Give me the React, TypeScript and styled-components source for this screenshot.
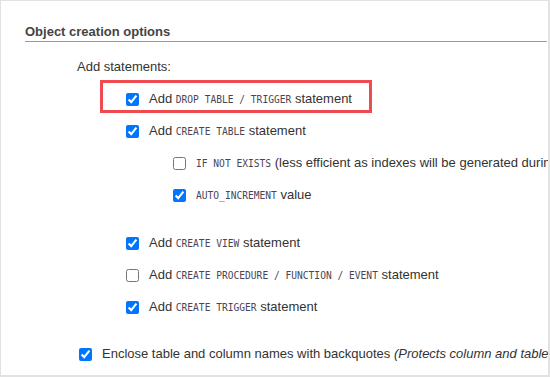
import React from 'react';
import styled, { createGlobalStyle } from 'styled-components';

const GlobalStyle = createGlobalStyle`
    body {
        margin: 0;
        background: #fff;
        font-family: "Liberation Sans", Arial, sans-serif;
    }
`;

interface Option {
    checked: boolean;
    parts: (string | { code: string })[];
    note?: string;
}

const tableOptions: Option[] = [
    { checked: true, parts: ['Add ', { code: 'CREATE TABLE' }, ' statement'] },
];

const tableSubOptions: Option[] = [
    { checked: false, parts: [{ code: 'IF NOT EXISTS' }, ' (less efficient as indexes will be generated during table creation)'] },
    { checked: true, parts: [{ code: 'AUTO_INCREMENT' }, ' value'] },
];

const otherOptions: Option[] = [
    { checked: true, parts: ['Add ', { code: 'CREATE VIEW' }, ' statement'] },
    { checked: false, parts: ['Add ', { code: 'CREATE PROCEDURE / FUNCTION / EVENT' }, ' statement'] },
    { checked: true, parts: ['Add ', { code: 'CREATE TRIGGER' }, ' statement'] },
];

const OptionRow = ({ option, indent }: { option: Option; indent: number }) => (
    <Row indent={indent}>
        <Check type="checkbox" defaultChecked={option.checked} />
        <Label>
            {option.parts.map((p, i) =>
                typeof p === 'string' ? <span key={i}>{p}</span> : <Code key={i}>{p.code}</Code>
            )}
            {option.note && <Note> {option.note}</Note>}
        </Label>
    </Row>
);

export default function App() {
    return (
        <>
            <GlobalStyle />
            <Frame>
                <Heading>Object creation options</Heading>
                <SubTitle>Add statements:</SubTitle>

                <Highlight>
                    <OptionRow indent={0} option={{ checked: true, parts: ['Add ', { code: 'DROP TABLE / TRIGGER' }, ' statement'] }} />
                </Highlight>

                <List top={10}>
                    {tableOptions.map((o, i) => <OptionRow key={i} option={o} indent={101} />)}
                    {tableSubOptions.map((o, i) => <OptionRow key={i} option={o} indent={148} />)}
                </List>

                <List top={32}>
                    {otherOptions.map((o, i) => <OptionRow key={i} option={o} indent={101} />)}
                </List>

                <List top={31}>
                    <OptionRow
                        indent={54}
                        option={{
                            checked: true,
                            parts: ['Enclose table and column names with backquotes'],
                            note: '(Protects column and table names formed with special characters or keywords)',
                        }}
                    />
                </List>
            </Frame>
        </>
    );
}

const Frame = styled.div`
    width: 550px;
    height: 377px;
    box-sizing: border-box;
    border: 1px solid #e2e2e2;
    border-right-width: 2px;
    border-bottom-width: 2px;
    padding: 22px 1px 0 24px;
    overflow: hidden;
    color: #333;
    font-size: 13px;
`;

const Heading = styled.div`
    font-size: 13px;
    font-weight: bold;
    line-height: 18px;
    color: #444;
    border-bottom: 1px solid #9a9a9a;
`;

const SubTitle = styled.div`
    margin: 17px 0 0 52px;
    line-height: 16px;
    color: #333;
`;

const Highlight = styled.div`
    width: 272px;
    box-sizing: border-box;
    margin: 5px 0 0 75px;
    padding: 8px 0 3px 23px;
    border: 3px solid #ef4a4f;
`;

const List = styled.div<{ top: number }>`
    display: flex;
    flex-direction: column;
    gap: 16px;
    margin-top: ${p => p.top}px;
`;

const Row = styled.div<{ indent: number }>`
    display: flex;
    align-items: center;
    height: 16px;
    padding-left: ${p => p.indent}px;
    white-space: nowrap;
`;

const Check = styled.input`
    width: 13px;
    height: 13px;
    margin: 0 10px 0 0;
    flex: none;
    accent-color: #0075ff;
`;

const Label = styled.span`
    font-size: 13px;
    line-height: 16px;
    color: #333;
`;

const Code = styled.code`
    font-family: "DejaVu Sans Mono", monospace;
    font-size: 9.6px;
    color: #4a4556;
`;

const Note = styled.em`
    font-style: italic;
    color: #333;
`;
